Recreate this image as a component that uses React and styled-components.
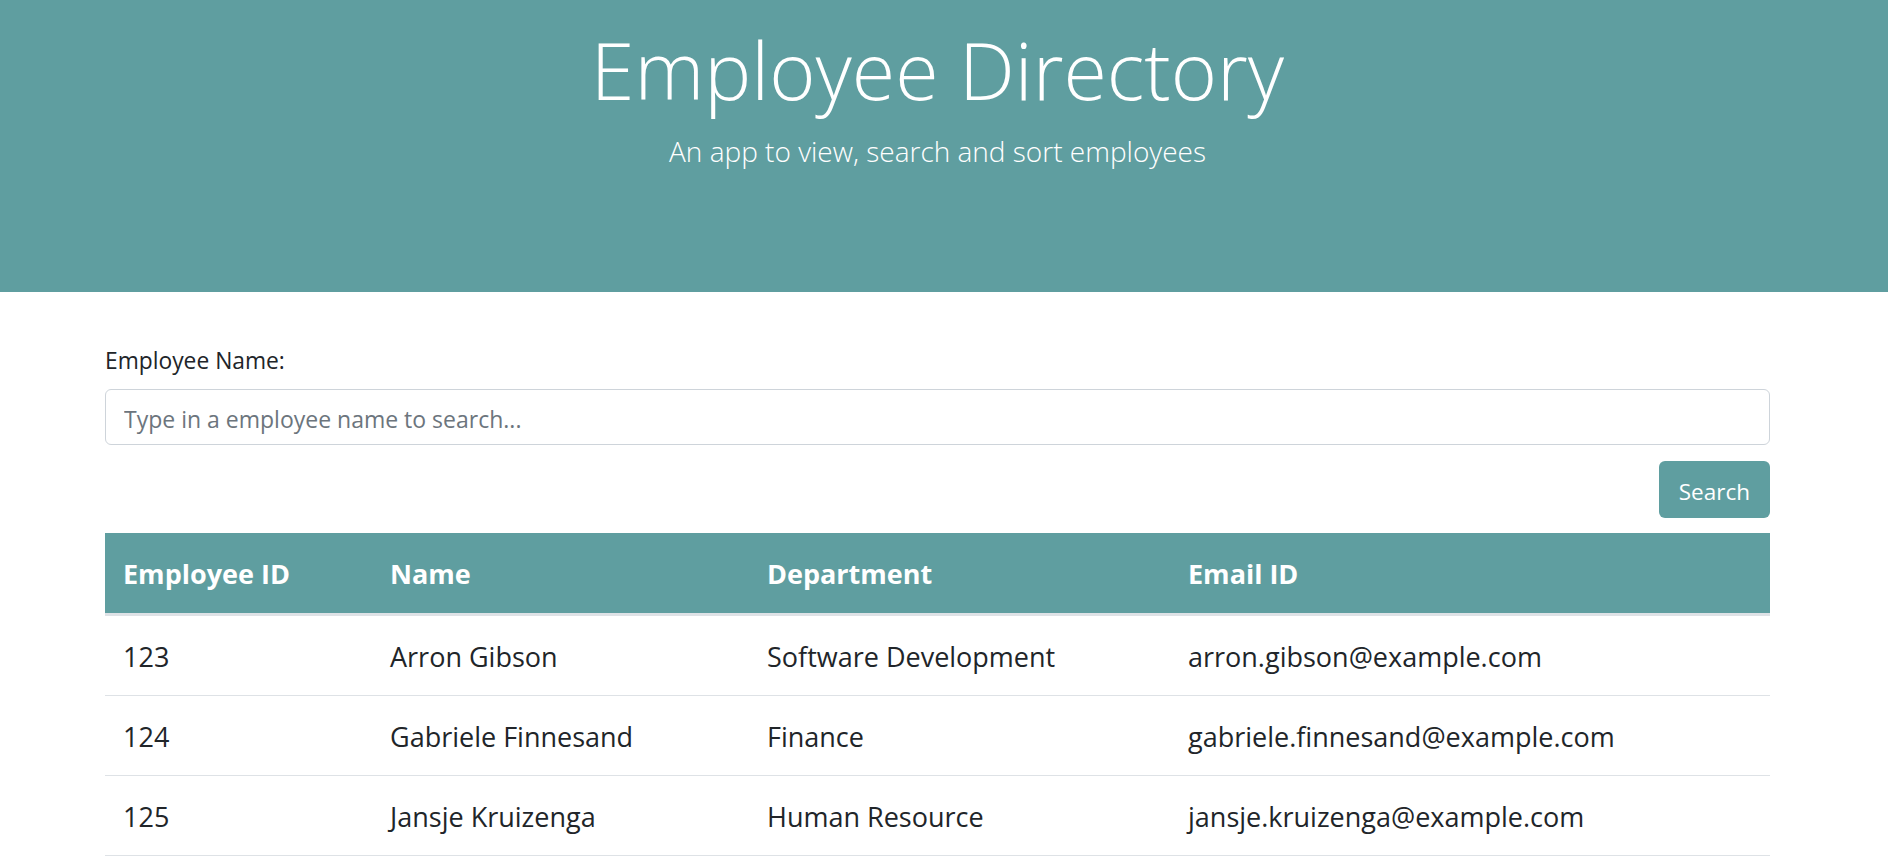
import React from "react";
import styled, { createGlobalStyle } from "styled-components";

const GlobalStyle = createGlobalStyle`
  * {
    box-sizing: border-box;
  }

  html, body {
    margin: 0;
    padding: 0;
    background: #fff;
  }

  body {
    font-family: "Open Sans", "Noto Sans", "Liberation Sans", sans-serif;
    color: #212529;
  }
`;

const teal = "#5f9ea0";

const Jumbotron = styled.header`
  background: ${teal};
  height: 292px;
  padding: 19px 118px 0 105px;
  margin-bottom: 51px;
  text-align: center;
  color: #fff;
`;

const Title = styled.h1`
  margin: 0;
  font-size: 79px;
  font-weight: 300;
  line-height: 101px;
`;

const Lead = styled.p`
  margin: 9px 0 0;
  font-size: 28px;
  font-weight: 300;
  line-height: 45px;
`;

const Container = styled.main`
  padding: 0 118px 0 105px;
`;

const Label = styled.label`
  display: block;
  font-size: 22.8px;
  line-height: 36px;
  margin-bottom: 10px;
`;

const Input = styled.input`
  display: block;
  width: 100%;
  height: 56px;
  padding: 3px 18px 0;
  font-family: inherit;
  font-size: 23px;
  color: #495057;
  background: #fff;
  border: 1.5px solid #ced4da;
  border-radius: 6px;
  outline: none;

  &::placeholder {
    color: #6c757d;
  }
`;

const Actions = styled.div`
  display: flex;
  justify-content: flex-end;
  margin-top: 16px;
`;

const Button = styled.button`
  height: 57px;
  padding: 3px 20px 0;
  font-family: inherit;
  font-size: 22.5px;
  color: #fff;
  background: ${teal};
  border: none;
  border-radius: 6px;
  cursor: pointer;
`;

const Table = styled.table`
  width: 100%;
  margin-top: 15px;
  border-collapse: collapse;
  table-layout: fixed;
  font-size: 27px;
`;

const Col = styled.col`
  width: ${(p) => p.$w}px;
`;

const Th = styled.th`
  padding: 19px 18px 17px;
  line-height: 44px;
  text-align: left;
  font-weight: 700;
  color: #fff;
  background: ${teal};
  border-bottom: 3px solid #dee2e6;
`;

const Td = styled.td`
  padding: 19px 18px 17px;
  line-height: 43px;
  vertical-align: top;
  border-bottom: 1px solid #dee2e6;
`;

const employees = [
  { id: 123, name: "Arron Gibson", dept: "Software Development", email: "arron.gibson@example.com" },
  { id: 124, name: "Gabriele Finnesand", dept: "Finance", email: "gabriele.finnesand@example.com" },
  { id: 125, name: "Jansje Kruizenga", dept: "Human Resource", email: "jansje.kruizenga@example.com" },
];

export default function App() {
  return (
    <>
      <GlobalStyle />
      <Jumbotron>
        <Title>Employee Directory</Title>
        <Lead>An app to view, search and sort employees</Lead>
      </Jumbotron>
      <Container>
        <Label htmlFor="search">Employee Name:</Label>
        <Input id="search" type="text" placeholder="Type in a employee name to search..." />
        <Actions>
          <Button type="button">Search</Button>
        </Actions>
        <Table>
          <colgroup>
            <Col $w={267} />
            <Col $w={377} />
            <Col $w={421} />
            <Col $w={600} />
          </colgroup>
          <thead>
            <tr>
              <Th>Employee ID</Th>
              <Th>Name</Th>
              <Th>Department</Th>
              <Th>Email ID</Th>
            </tr>
          </thead>
          <tbody>
            {employees.map((e) => (
              <tr key={e.id}>
                <Td>{e.id}</Td>
                <Td>{e.name}</Td>
                <Td>{e.dept}</Td>
                <Td>{e.email}</Td>
              </tr>
            ))}
          </tbody>
        </Table>
      </Container>
    </>
  );
}
